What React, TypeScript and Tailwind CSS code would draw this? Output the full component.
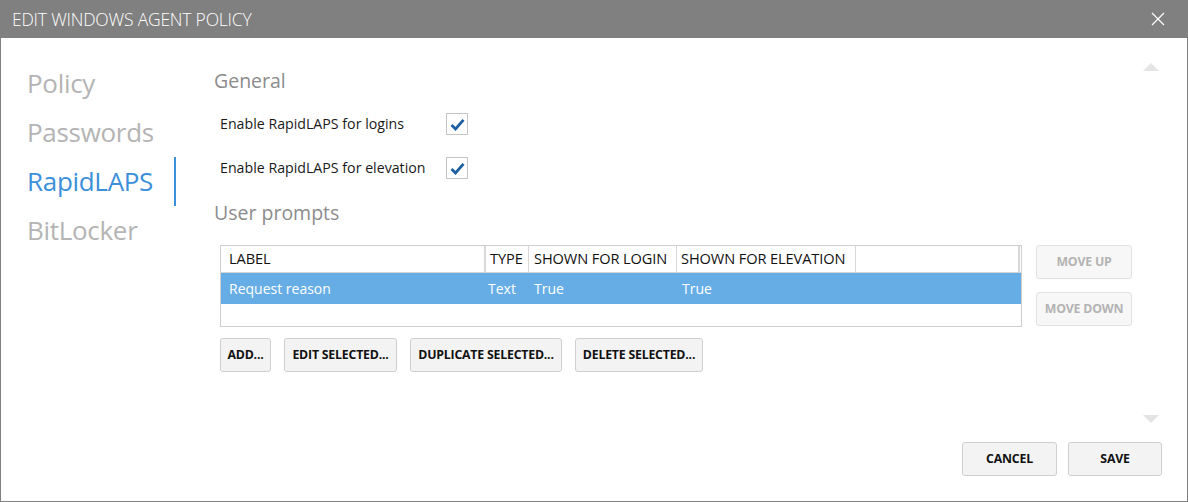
import React from "react";

const font = { fontFamily: '"Open Sans", "Noto Sans", sans-serif' };

function Check({ label }: { label: string }) {
  return (
    <div className="flex items-center h-[22px]">
      <span className="w-[232px] pl-[6px] text-[14.2px] text-[#1a1a1a]">{label}</span>
      <span className="w-[22px] h-[22px] border border-[#c4c4c4] bg-white flex items-center justify-center">
        <svg width="15" height="13" viewBox="0 0 15 13">
          <path d="M1.5 7 L5.5 11 L13.5 1.8" fill="none" stroke="#1c5fa3" strokeWidth="2.8" strokeLinejoin="miter" />
        </svg>
      </span>
    </div>
  );
}

function Btn({ children, className = "", disabled = false }: { children: React.ReactNode; className?: string; disabled?: boolean }) {
  return (
    <div
      className={
        "h-[34px] flex items-center justify-center rounded-[3px] border text-[12.3px] font-bold tracking-[-0.2px] " +
        (disabled ? "border-[#e2e2e2] bg-[#f7f7f7] text-[#b3b3b3] " : "border-[#cfcfcf] bg-[#f3f3f3] text-[#111] ") +
        className
      }
    >
      {children}
    </div>
  );
}

export default function App() {
  return (
    <div style={font} className="w-[1188px] h-[502px] flex flex-col bg-white border-x border-b border-[#808080] overflow-hidden">
      <div className="h-[38px] shrink-0 bg-[#808080] flex items-center justify-between pl-[11px] pr-[22px]">
        <span className="text-[17.5px] text-white font-light tracking-[-0.2px]">EDIT WINDOWS AGENT POLICY</span>
        <svg width="14" height="14" viewBox="0 0 14 14">
          <path d="M1 1 L13 13 M13 1 L1 13" stroke="#ffffff" strokeWidth="1.2" />
        </svg>
      </div>
      <div className="flex flex-1">
        <div className="w-[175px] shrink-0 pt-[21px]">
          {["Policy", "Passwords", "RapidLAPS", "BitLocker"].map((n) => (
            <div
              key={n}
              className={
                "h-[49px] flex items-center pl-[26px] text-[26px] tracking-[-0.3px] " +
                (n === "RapidLAPS" ? "text-[#3c8fd9] border-r-[2px] border-[#3c8fd9]" : "text-[#b4b4b4]")
              }
            >
              {n}
            </div>
          ))}
        </div>
        <div className="flex-1 pl-[38px] pt-[29px] flex flex-col">
          <div className="text-[19.5px] text-[#8c8c8c] leading-[28px]">General</div>
          <div className="mt-[18px] flex flex-col gap-[22px]">
            <Check label="Enable RapidLAPS for logins" />
            <Check label="Enable RapidLAPS for elevation" />
          </div>
          <div className="mt-[20px] text-[19.5px] text-[#8c8c8c] leading-[28px]">User prompts</div>
          <div className="mt-[18px] pl-[6px] flex gap-[14px]">
            <div className="w-[802px] h-[82px] border border-[#cfcfcf] flex flex-col text-[14px]">
              <div className="h-[27px] flex items-center text-[#111] border-b border-[#d4d4d4] text-[14.6px] tracking-[-0.1px]">
                <div className="w-[265px] pl-[8px] h-full flex items-center border-r-[2px] border-[#d8d8d8]">LABEL</div>
                <div className="w-[43px] pl-[4px] h-full flex items-center border-r border-[#d8d8d8]">TYPE</div>
                <div className="w-[148px] pl-[5px] h-full flex items-center border-r border-[#d8d8d8]">SHOWN FOR LOGIN</div>
                <div className="w-[179px] pl-[4px] h-full flex items-center border-r border-[#d8d8d8]">SHOWN FOR ELEVATION</div>
                <div className="w-[164px] h-full border-r-[2px] border-[#d8d8d8]"></div>
              </div>
              <div className="h-[31px] flex items-center bg-[#66ade6] text-white">
                <div className="w-[265px] pl-[8px]">Request reason</div>
                <div className="w-[43px] pl-[2px]">Text</div>
                <div className="w-[148px] pl-[5px]">True</div>
                <div className="w-[179px] pl-[5px]">True</div>
              </div>
            </div>
            <div className="flex flex-col gap-[13px]">
              <Btn disabled className="w-[96px]">MOVE UP</Btn>
              <Btn disabled className="w-[96px]">MOVE DOWN</Btn>
            </div>
          </div>
          <div className="mt-[11px] pl-[6px] flex gap-[13px]">
            <Btn className="w-[51px]">ADD...</Btn>
            <Btn className="w-[113px]">EDIT SELECTED...</Btn>
            <Btn className="w-[152px]">DUPLICATE SELECTED...</Btn>
            <Btn className="w-[128px]">DELETE SELECTED...</Btn>
          </div>
          <div className="flex-1"></div>
          <div className="flex justify-end gap-[11px] pr-[25px] pb-[25px]">
            <Btn className="w-[95px]">CANCEL</Btn>
            <Btn className="w-[94px]">SAVE</Btn>
          </div>
        </div>
        <div className="w-0 relative">
          <div className="absolute right-[28px] top-[25px] w-0 h-0 border-x-[8px] border-x-transparent border-b-[8px] border-b-[#e4e4e4]"></div>
          <div className="absolute right-[28px] top-[377px] w-0 h-0 border-x-[8px] border-x-transparent border-t-[8px] border-t-[#e4e4e4]"></div>
        </div>
      </div>
    </div>
  );
}
